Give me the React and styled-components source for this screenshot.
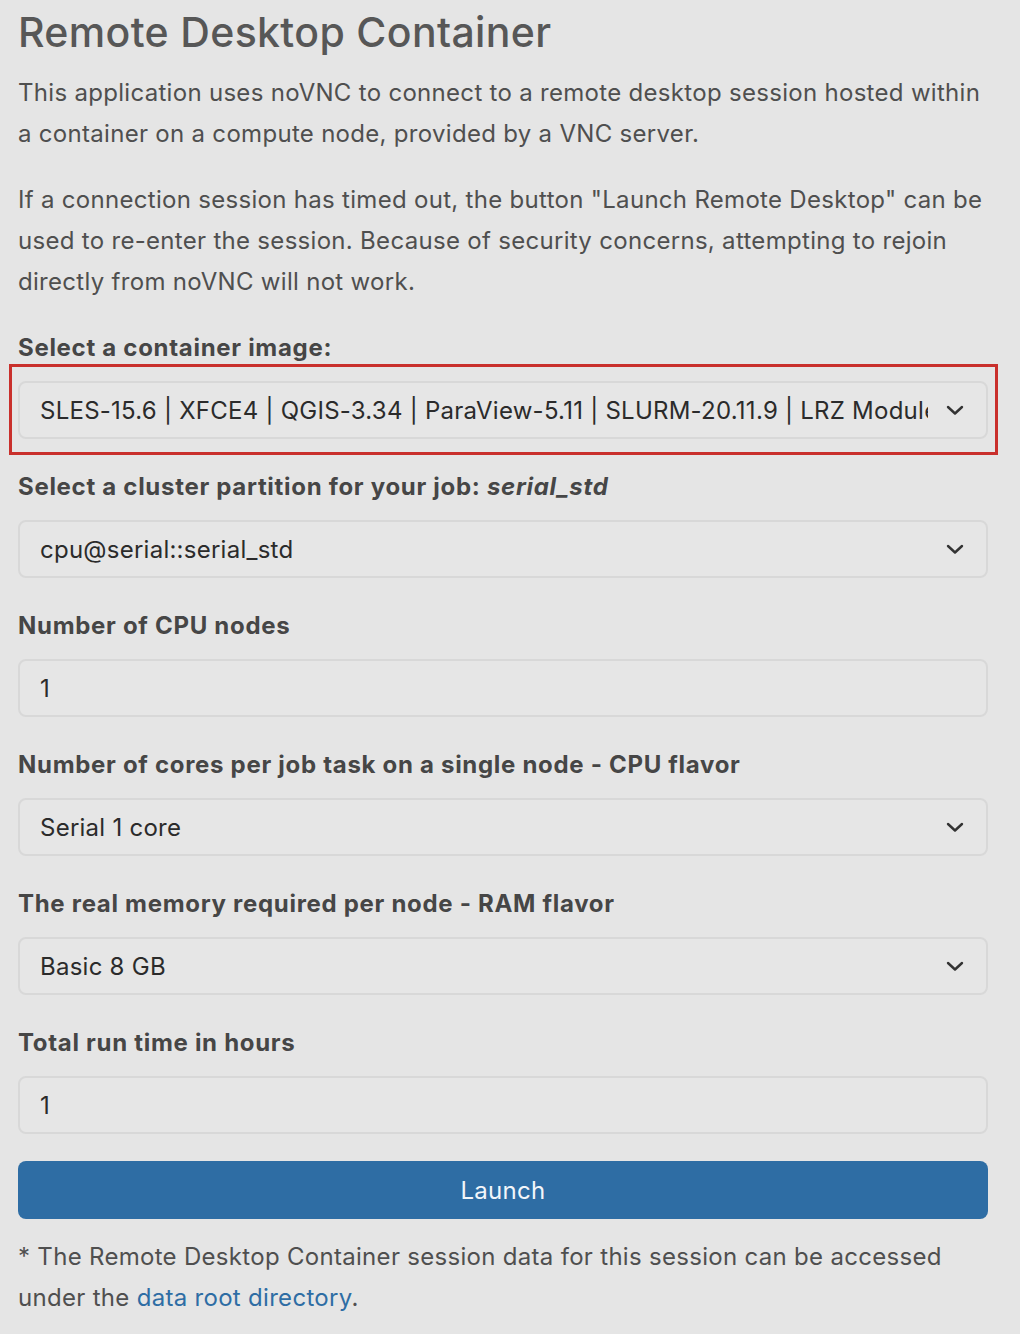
import React from "react";
import styled, { createGlobalStyle } from "styled-components";

const GlobalStyle = createGlobalStyle`
    html, body {
        margin: 0;
        padding: 0;
        background: #e5e5e5;
    }
    body {
        font-family: Inter, "Noto Sans", "Liberation Sans", sans-serif;
        color: #4d4d4d;
    }
`;

const Page = styled.div`
    padding: 8px 32px 30px 18px;
    width: 970px;
`;

const Title = styled.h1`
    font-size: 41px;
    line-height: 49px;
    font-weight: 500;
    color: #575757;
    margin: 0 0 15px;
    letter-spacing: 0.35px;
`;

const Text = styled.p`
    font-size: 24px;
    line-height: 41px;
    margin: 0 0 25px;
    color: #4f4f4f;
    letter-spacing: 0.3px;
`;

const Form = styled.form`
    margin-top: 28px;
`;

const Group = styled.div`
    margin-bottom: ${(p) => (p.$last ? "27px" : "30px")};
`;

const Label = styled.label`
    display: block;
    font-size: 24px;
    line-height: 36px;
    font-weight: 700;
    color: #464646;
    margin-bottom: 15px;
    letter-spacing: 0.7px;
`;

const Control = styled.div`
    position: relative;
`;

const Highlight = styled.div`
    position: absolute;
    top: -17px;
    bottom: -16px;
    left: -9px;
    right: -10px;
    border: 3px solid #c9302c;
    pointer-events: none;
`;

const Select = styled.select`
    appearance: none;
    -webkit-appearance: none;
    display: block;
    width: 100%;
    height: 58px;
    box-sizing: border-box;
    padding: 0 58px 0 20px;
    font-family: Inter, "Noto Sans", "Liberation Sans", sans-serif;
    font-size: 24px;
    letter-spacing: 0.25px;
    color: #2b2b2b;
    background: #e6e6e6;
    border: 2px solid #d8d8d8;
    border-radius: 8px;
    outline: none;
`;

const Input = styled.input`
    display: block;
    width: 100%;
    height: 58px;
    box-sizing: border-box;
    padding: 0 20px;
    font-family: Inter, "Noto Sans", "Liberation Sans", sans-serif;
    font-size: 24px;
    color: #2b2b2b;
    background: #e6e6e6;
    border: 2px solid #d8d8d8;
    border-radius: 8px;
    outline: none;
`;

const Chevron = styled.svg`
    position: absolute;
    right: 24px;
    top: 50%;
    margin-top: -6px;
    pointer-events: none;
`;

const Button = styled.button`
    display: block;
    width: 100%;
    height: 58px;
    border: none;
    border-radius: 8px;
    background: #2e6da4;
    color: #f2f6fa;
    font-family: Inter, "Noto Sans", "Liberation Sans", sans-serif;
    font-size: 24px;
    letter-spacing: 0.3px;
    cursor: pointer;
`;

const Note = styled.p`
    font-size: 24px;
    line-height: 41px;
    margin: 17px 0 0;
    color: #4f4f4f;
    letter-spacing: 0.3px;
`;

const Link = styled.a`
    color: #2e6da4;
    text-decoration: none;
`;

function ChevronIcon() {
    return (
        <Chevron width="18" height="12" viewBox="0 0 18 12">
            <path d="M2 3 L9 9.5 L16 3" fill="none" stroke="#333" strokeWidth="2.4" strokeLinecap="round" strokeLinejoin="round" />
        </Chevron>
    );
}

function SelectField({ value, options, highlighted }) {
    return (
        <Control>
            <Select defaultValue={value}>
                {options.map((o) => (
                    <option key={o}>{o}</option>
                ))}
            </Select>
            <ChevronIcon />
            {highlighted && <Highlight />}
        </Control>
    );
}

export default function App() {
    const image = "SLES-15.6 | XFCE4 | QGIS-3.34 | ParaView-5.11 | SLURM-20.11.9 | LRZ Modules";
    return (
        <Page>
            <GlobalStyle />
            <Title>Remote Desktop Container</Title>
            <Text>
                This application uses noVNC to connect to a remote desktop session hosted within a container on a
                compute node, provided by a VNC server.
            </Text>
            <Text>
                If a connection session has timed out, the button "Launch Remote Desktop" can be used to re-enter the
                session. Because of security concerns, attempting to rejoin directly from noVNC will not work.
            </Text>
            <Form onSubmit={(e) => e.preventDefault()}>
                <Group>
                    <Label>Select a container image:</Label>
                    <SelectField value={image} options={[image]} highlighted />
                </Group>
                <Group>
                    <Label>
                        Select a cluster partition for your job: <i>serial_std</i>
                    </Label>
                    <SelectField value="cpu@serial::serial_std" options={["cpu@serial::serial_std"]} />
                </Group>
                <Group>
                    <Label>Number of CPU nodes</Label>
                    <Input defaultValue="1" />
                </Group>
                <Group>
                    <Label>Number of cores per job task on a single node - CPU flavor</Label>
                    <SelectField value="Serial 1 core" options={["Serial 1 core"]} />
                </Group>
                <Group>
                    <Label>The real memory required per node - RAM flavor</Label>
                    <SelectField value="Basic 8 GB" options={["Basic 8 GB"]} />
                </Group>
                <Group $last>
                    <Label>Total run time in hours</Label>
                    <Input defaultValue="1" />
                </Group>
                <Button type="submit">Launch</Button>
            </Form>
            <Note>
                * The Remote Desktop Container session data for this session can be accessed under the{" "}
                <Link href="#">data root directory</Link>.
            </Note>
        </Page>
    );
}
